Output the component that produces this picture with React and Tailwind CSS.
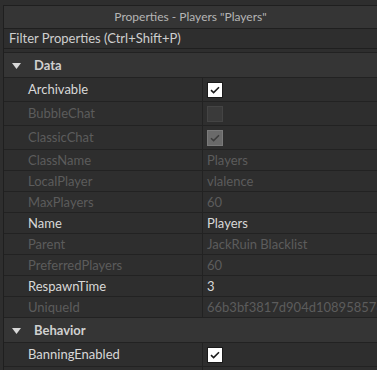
import React from "react";

const font = { fontFamily: "Lato, 'Noto Sans', sans-serif" };

function Check({ kind }) {
  if (kind === "on")
    return (
      <div className="w-[16px] h-[16px] bg-white border border-[#1a1a1a] flex items-center justify-center">
        <svg width="10" height="8" viewBox="0 0 10 8"><path d="M1 4.2 L3.6 6.6 L9 1.2" stroke="#1b1b1b" strokeWidth="1.6" fill="none" /></svg>
      </div>
    );
  if (kind === "offDis")
    return <div className="w-[16px] h-[16px] bg-[#3a3a3a] border border-[#444]" />;
  return (
    <div className="w-[16px] h-[16px] bg-[#6a6a6a] border border-[#7a7a7a] flex items-center justify-center">
      <svg width="10" height="8" viewBox="0 0 10 8"><path d="M1 4.2 L3.6 6.6 L9 1.2" stroke="#3c3c3c" strokeWidth="1.5" fill="none" /></svg>
    </div>
  );
}

function Row({ name, value, check, enabled, tall }) {
  const c = enabled ? "text-[#d8d8d8]" : "text-[#5c5c5c]";
  return (
    <div className={`flex border-b border-[#222] ${tall ? "h-[24px]" : "h-[21px]"}`}>
      <div className={`w-[199px] pl-[24px] flex items-center border-r border-[#222] ${c}`}>{name}</div>
      <div className={`flex-1 pl-[4px] flex items-center whitespace-nowrap overflow-hidden ${c}`}>
        {check ? <Check kind={check} /> : value}
      </div>
    </div>
  );
}

function Header({ title }) {
  return (
    <div className="flex items-center h-[25px] border-b border-[#222] bg-[#353535] text-[#d0d0d0] font-bold pt-[1px]">
      <svg className="ml-[8px] mr-[13px]" width="9" height="6" viewBox="0 0 9 6"><path d="M0 0 L9 0 L4.5 6 Z" fill="#d8d8d8" /></svg>
      {title}
    </div>
  );
}

export default function App() {
  return (
    <div className="w-[377px] h-[370px] bg-[#2e2e2e] overflow-hidden text-[13px] leading-none" style={font}>
      <div className="h-[5px]" />
      <div className="ml-[3px] border-l border-[#1f1f1f]">
        <div className="h-[24px] border-y border-[#1f1f1f] bg-[#353535] flex items-center justify-center text-[#b5b5b5] text-[12px]">
          Properties - Players "Players"
        </div>
        <div className="h-[20px] bg-[#2e2e2e] flex items-center pl-[5px] text-[#cfcfcf] border-b border-[#1f1f1f]">
          Filter Properties (Ctrl+Shift+P)
        </div>
        <div className="h-[3px]" />
        <div className="border-t border-[#222]">
          <Header title="Data" />
          <Row name="Archivable" check="on" enabled tall />
          <Row name="BubbleChat" check="offDis" tall />
          <Row name="ClassicChat" check="onDis" tall />
          <Row name="ClassName" value="Players" />
          <Row name="LocalPlayer" value="vlalence" />
          <Row name="MaxPlayers" value="60" />
          <Row name="Name" value="Players" enabled />
          <Row name="Parent" value="JackRuin Blacklist" />
          <Row name="PreferredPlayers" value="60" />
          <Row name="RespawnTime" value="3" enabled />
          <Row name="UniqueId" value="66b3bf3817d904d1089585760000" />
          <Header title="Behavior" />
          <Row name="BanningEnabled" check="on" enabled tall />
          <Row name="" value="" />
        </div>
      </div>
    </div>
  );
}
